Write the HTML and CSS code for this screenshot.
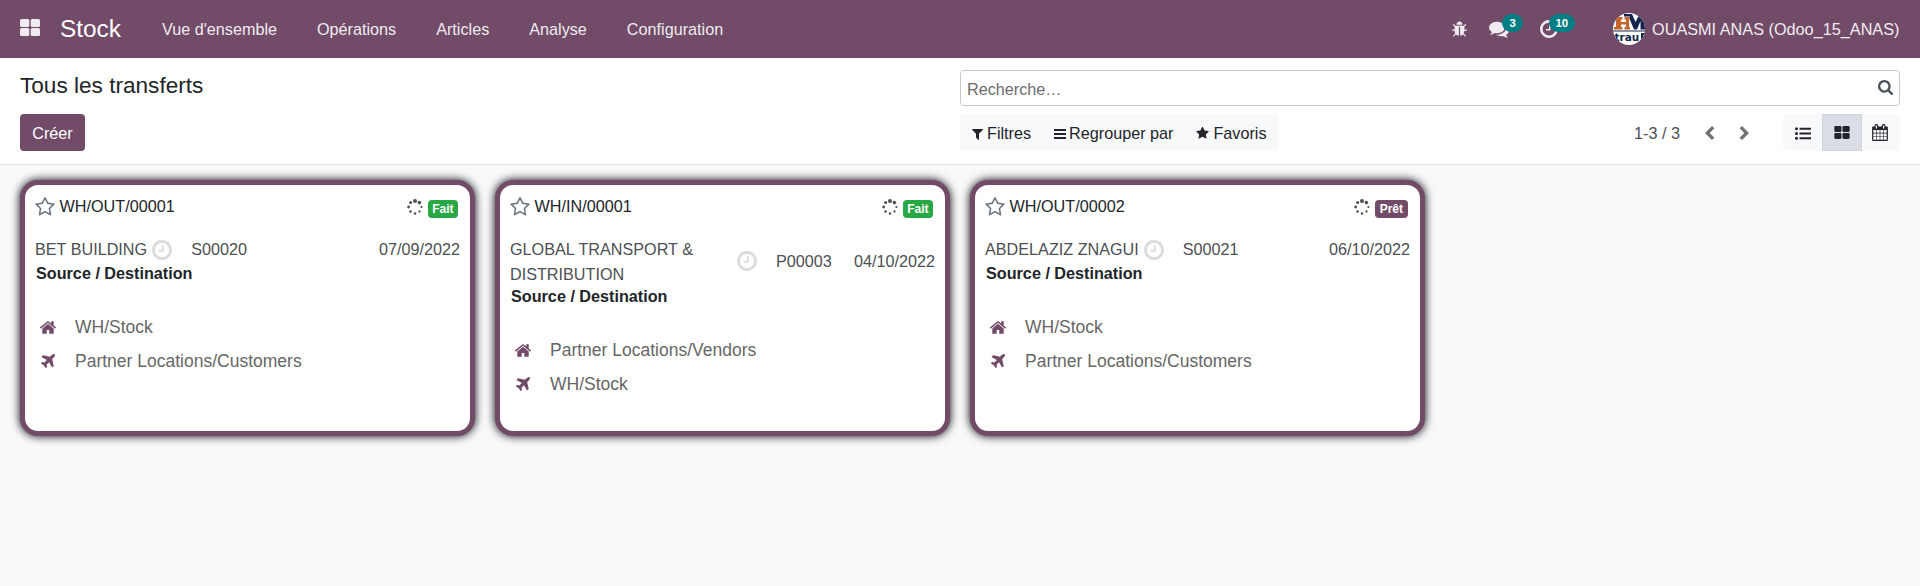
FILE: index.html
```
<!DOCTYPE html>
<html lang="fr">
<head>
<meta charset="utf-8">
<title>Tous les transferts - Odoo</title>
<link rel="stylesheet" href="styles.css">
</head>
<body>
<svg class="sprite" aria-hidden="true">
  <symbol id="th" viewBox="0 0 20 17"><rect width="9.3" height="8" rx="1.5"/><rect x="10.7" width="9.3" height="8" rx="1.5"/><rect y="9" width="9.3" height="8" rx="1.5"/><rect x="10.7" y="9" width="9.3" height="8" rx="1.5"/></symbol>
  <symbol id="bug" viewBox="0 0 1792 1792"><path d="M1696 960q0 26-19 45t-45 19h-224q0 171-67 290l208 209q19 19 19 45t-19 45q-18 19-45 19t-45-19l-198-197q-5 5-15 13t-42 28.5-65 36.5-82 29-97 13v-896h-128v896q-51 0-101.5-13.5t-87-33-66-39-43.5-32.5l-15-14-183 207q-20 21-48 21-24 0-43-16-19-18-20.5-44.5t15.5-46.5l202-227q-58-114-58-274h-224q-26 0-45-19t-19-45 19-45 45-19h224v-294l-173-173q-19-19-19-45t19-45 45-19 45 19l173 173h844l173-173q19-19 45-19t45 19 19 45-19 45l-173 173v294h224q26 0 45 19t19 45zm-480-576h-640q0-133 93.5-226.5t226.5-93.5 226.5 93.5 93.5 226.5z"/></symbol>
  <symbol id="comments" viewBox="0 0 1792 1792"><path d="M1408 768q0 139-94 257t-256.5 186.5-353.5 68.5q-86 0-176-16-124 88-278 128-36 9-86 16h-3q-11 0-20.5-8t-11.5-21q-1-3-1-6.5t.5-6.5 2-6l2.5-5 3.5-5.5 4-5 4.5-5 4-4.5q5-6 23-25t26-29.5 22.5-29 25-38.5 20.500-44q-124-72-195-177t-71-224q0-139 94-257t256.500-186.500 353.500-68.500 353.500 68.500 256.500 186.500 94 257zm384 256q0 120-71 224.500t-195 176.500q10 24 20.500 44t25 38.500 22.500 29 26 29.500 23 25q1 1 4 4.500t4.500 5 4 5 3.500 5.500l2.500 5 2 6 .5 6.500-1 6.500q-3 14-13 22t-22 7q-50-7-86-16-154-40-278-128-90 16-176 16-271 0-472-132 58 4 88 4 161 0 309-45t264-129q125-92 192-212t67-254q0-77-23-152 129 71 204 178t75 230z"/></symbol>
  <symbol id="clock" viewBox="128 128 1536 1536"><path d="M1024 544v448q0 14-9 23t-23 9h-320q-14 0-23-9t-9-23v-64q0-14 9-23t23-9h224v-352q0-14 9-23t23-9h64q14 0 23 9t9 23zm416 352q0-148-73-273t-198-198-273-73-273 73-198 198-73 273 73 273 198 198 273 73 273-73 198-198 73-273zm224 0q0 209-103 385.500t-279.500 279.500-385.500 103-385.500-103-279.500-279.500-103-385.500 103-385.500 279.500-279.500 385.500-103 385.500 103 279.500 279.500 103 385.500z"/></symbol>
  <symbol id="search" viewBox="64 128 1664 1664"><path d="M1216 832q0-185-131.500-316.500t-316.500-131.500-316.500 131.500-131.500 316.500 131.500 316.500 316.500 131.500 316.500-131.500 131.500-316.500zm512 832q0 52-38 90t-90 38q-54 0-90-38l-343-342q-179 124-399 124-143 0-273.500-55.500t-225-150-150-225-55.500-273.500 55.500-273.500 150-225 225-150 273.500-55.500 273.500 55.500 225 150 150 225 55.500 273.500q0 220-124 399l343 343q37 37 37 90z"/></symbol>
  <symbol id="filter" viewBox="192 256 1408 1408"><path d="M1595 295q17 41-14 70l-493 493v742q0 42-39 59-13 5-25 5-27 0-45-19l-256-256q-19-19-19-45v-486l-493-493q-31-29-14-70 17-39 59-39h1280q42 0 59 39z"/></symbol>
  <symbol id="bars" viewBox="0 0 12 10"><path d="M0 0h12v2H0zM0 4h12v2H0zM0 8h12v2H0z"/></symbol>
  <symbol id="star" viewBox="64 59 1664 1600"><path d="M1728 647q0 22-26 48l-363 354 86 500q1 7 1 20 0 21-10.500 35.500t-30.500 14.500q-19 0-40-12l-449-236-449 236q-22 12-40 12-21 0-31.500-14.500t-10.500-35.500q0-6 2-20l86-500-364-354q-25-27-25-48 0-37 56-46l502-73 225-455q19-41 49-41t49 41l225 455 502 73q56 9 56 46z"/></symbol>
  <symbol id="star-o" viewBox="64 59 1664 1600"><path d="M1201 1004l306-297-422-62-189-382-189 382-422 62 306 297-73 421 378-199 377 199zm527-357q0 22-26 48l-363 354 86 500q1 7 1 20 0 50-41 50-19 0-40-12l-449-236-449 236q-22 12-40 12-21 0-31.500-14.500t-10.500-35.500q0-6 2-20l86-500-364-354q-25-27-25-48 0-37 56-46l502-73 225-455q19-41 49-41t49 41l225 455 502 73q56 9 56 46z"/></symbol>
  <symbol id="home" viewBox="89 253 1614 1283"><path d="M1472 992v480q0 26-19 45t-45 19h-384v-384h-256v384h-384q-26 0-45-19t-19-45v-480q0-1 .5-3t.5-3l575-474 575 474q1 2 1 6zm223-69l-62 74q-8 9-21 11h-3q-13 0-21-7l-692-577-692 577q-12 8-24 7-13-2-21-11l-62-74q-8-10-7-23.500t11-21.500l719-599q32-26 76-26t76 26l244 204v-195q0-14 9-23t23-9h192q14 0 23 9t9 23v408l219 182q10 8 11 21.500t-7 23.500z"/></symbol>
  <symbol id="plane" viewBox="192 128 1408 1408"><path d="M1568 160q44 52 12 148t-108 172l-161 161 160 696q5 19-12 33l-128 96q-7 6-19 6-4 0-7-1-15-3-21-16l-279-508-259 259 53 194q5 17-8 31l-96 96q-9 9-23 9h-2q-15-2-24-13l-189-252-252-189q-11-7-13-23-1-13 9-25l96-97q9-9 23-9 6 0 8 1l194 53 259-259-508-279q-14-8-17-24-2-16 9-27l128-128q14-13 30-8l665 159 160-160q76-76 172-108t148 12z"/></symbol>
  <symbol id="calendar" viewBox="64 0 1664 1792"><path d="M192 1664h288v-288h-288v288zm352 0h320v-288h-320v288zm-352-352h288v-320h-288v320zm352 0h320v-320h-320v320zm-352-384h288v-288h-288v288zm736 736h320v-288h-320v288zm-384-736h320v-288h-320v288zm768 736h288v-288h-288v288zm-384-352h320v-320h-320v320zm-352-864v-288q0-13-9.500-22.500t-22.500-9.500h-64q-13 0-22.500 9.500t-9.500 22.500v288q0 13 9.500 22.500t22.500 9.500h64q13 0 22.500-9.500t9.500-22.500zm736 864h288v-320h-288v320zm-384-384h320v-288h-320v288zm384 0h288v-288h-288v288zm32-480v-288q0-13-9.500-22.500t-22.500-9.500h-64q-13 0-22.500 9.500t-9.500 22.500v288q0 13 9.500 22.500t22.500 9.500h64q13 0 22.500-9.500t9.500-22.500zm384-64v1280q0 52-38 90t-90 38h-1408q-52 0-90-38t-38-90v-1280q0-52 38-90t90-38h128v-96q0-66 47-113t113-47h64q66 0 113 47t47 113v96h384v-96q0-66 47-113t113-47h64q66 0 113 47t47 113v96h128q52 0 90 38t38 90z"/></symbol>
  <symbol id="list" viewBox="0 0 16 13"><circle cx="1.500" cy="1.700" r="1.500"/><circle cx="1.500" cy="6.500" r="1.500"/><circle cx="1.500" cy="11.300" r="1.500"/><path d="M4.500.7H16v2H4.500zM4.500 5.500H16v2H4.500zM4.500 10.300H16v2H4.500z"/></symbol>
  <symbol id="left" viewBox="0 0 10 14"><path d="M7 0l2.400 2.300L4.700 7l4.700 4.700L7 14 0 7z"/></symbol>
  <symbol id="right" viewBox="0 0 10 14"><path d="M3 0L.6 2.300 5.300 7 .6 11.700 3 14l7-7z"/></symbol>
  <symbol id="spinner" viewBox="0 0 16 16"><circle cx="8" cy="2" r="2"/><circle cx="12.400" cy="3.600" r="1.800"/><circle cx="14.400" cy="8" r="1.100"/><circle cx="12.500" cy="12.500" r="1.150"/><circle cx="8" cy="14.400" r="1.250"/><circle cx="3.500" cy="12.500" r="1.300"/><circle cx="1.600" cy="8" r="1.400"/><circle cx="3.600" cy="3.600" r="1.500"/></symbol>
</svg>

<header class="navbar">
  <svg class="apps"><use href="#th"/></svg>
  <span class="brand">Stock</span>
  <nav class="menu"><a>Vue d'ensemble</a><a>Opérations</a><a>Articles</a><a>Analyse</a><a>Configuration</a></nav>
  <div class="systray">
    <svg class="bug"><use href="#bug"/></svg>
    <div class="tray messages"><svg><use href="#comments"/></svg><span class="count">3</span></div>
    <div class="tray activities"><svg><use href="#clock"/></svg><span class="count">10</span></div>
    <svg class="avatar" viewBox="0 0 32 32">
      <defs><clipPath id="round"><circle cx="16" cy="16" r="16"/></clipPath></defs>
      <g clip-path="url(#round)">
        <rect width="32" height="32" fill="#fff"/>
        <path fill="#c4652c" d="M2 4h7.500v2.500H8V9h5V6.500h-1.500V4H17v2.500h-1V14h1v2.500h-5.500V14H13v-2.500H8V14h1.500v2.500H1V14h2V6.500H2z"/>
        <path fill="#14264d" d="M11 1h8l3.500 8L26 2h6v14.500h-4.500V8L24 16.500h-3L17 7V3.500h-6z"/>
        <path fill="#14264d" d="M0 17.600h32v1H0z"/>
        <text class="logo-text" x="1.500" y="27.500">trau</text>
        <path fill="#14264d" d="M28 20h4v2h-2v4h-2z"/>
      </g>
    </svg>
    <span class="user">OUASMI ANAS (Odoo_15_ANAS)</span>
  </div>
</header>

<section class="control-panel">
  <div class="cp-left">
    <h1 class="title">Tous les transferts</h1>
    <button class="create">Créer</button>
  </div>
  <div class="cp-right">
    <div class="searchbox"><span>Recherche…</span><svg><use href="#search"/></svg></div>
    <div class="tools">
      <div class="filters">
        <span class="tool"><svg class="i-filter"><use href="#filter"/></svg>Filtres</span>
        <span class="tool"><svg class="i-bars"><use href="#bars"/></svg>Regrouper par</span>
        <span class="tool"><svg class="i-star"><use href="#star"/></svg>Favoris</span>
      </div>
      <div class="pager"><span>1-3 / 3</span><svg><use href="#left"/></svg><svg><use href="#right"/></svg></div>
      <div class="views">
        <span class="view"><svg class="v-list"><use href="#list"/></svg></span>
        <span class="view active"><svg class="v-kanban"><use href="#th"/></svg></span>
        <span class="view"><svg class="v-calendar"><use href="#calendar"/></svg></span>
      </div>
    </div>
  </div>
</section>

<main class="kanban">
  <article class="card">
    <div class="head"><svg class="fav"><use href="#star-o"/></svg><span class="ref">WH/OUT/00001</span><svg class="spin"><use href="#spinner"/></svg><span class="badge done">Fait</span></div>
    <div class="info"><span class="partner">BET BUILDING</span><svg class="clock"><use href="#clock"/></svg><span class="origin">S00020</span><span class="date">07/09/2022</span></div>
    <div class="label">Source / Destination</div>
    <div class="place first"><svg class="home"><use href="#home"/></svg><span>WH/Stock</span></div>
    <div class="place"><svg class="plane"><use href="#plane"/></svg><span>Partner Locations/Customers</span></div>
  </article>
  <article class="card">
    <div class="head"><svg class="fav"><use href="#star-o"/></svg><span class="ref">WH/IN/00001</span><svg class="spin"><use href="#spinner"/></svg><span class="badge done">Fait</span></div>
    <div class="info two-lines"><span class="partner long">GLOBAL TRANSPORT &amp; DISTRIBUTION</span><svg class="clock"><use href="#clock"/></svg><span class="origin">P00003</span><span class="date">04/10/2022</span></div>
    <div class="label">Source / Destination</div>
    <div class="place first"><svg class="home"><use href="#home"/></svg><span>Partner Locations/Vendors</span></div>
    <div class="place"><svg class="plane"><use href="#plane"/></svg><span>WH/Stock</span></div>
  </article>
  <article class="card">
    <div class="head"><svg class="fav"><use href="#star-o"/></svg><span class="ref">WH/OUT/00002</span><svg class="spin"><use href="#spinner"/></svg><span class="badge ready">Prêt</span></div>
    <div class="info"><span class="partner">ABDELAZIZ ZNAGUI</span><svg class="clock"><use href="#clock"/></svg><span class="origin">S00021</span><span class="date">06/10/2022</span></div>
    <div class="label">Source / Destination</div>
    <div class="place first"><svg class="home"><use href="#home"/></svg><span>WH/Stock</span></div>
    <div class="place"><svg class="plane"><use href="#plane"/></svg><span>Partner Locations/Customers</span></div>
  </article>
</main>
</body>
</html>
```
FILE: styles.css
```
* { box-sizing: border-box; }
body {
  margin: 0;
  min-height: 586px;
  background: #f8f9fb;
  color: #212529;
  font: 16.2px/24px "Liberation Sans", Arial, sans-serif;
}
svg { display: block; flex: none; fill: currentColor; }
.sprite { position: absolute; width: 0; height: 0; }

/* Top bar */
.navbar {
  display: flex;
  align-items: center;
  height: 58px;
  padding: 0 20px;
  background: #714b67;
  color: #efebf0;
}
.apps { width: 20px; height: 17px; margin-top: -3px; }
.brand { margin-left: 20px; width: 102px; font-size: 24.4px; color: #fff; }
.menu { display: flex; gap: 40px; }
.systray { display: flex; align-items: center; margin-left: auto; }
.bug { width: 17px; height: 17px; margin-right: 21px; }
.tray { position: relative; }
.messages { width: 20px; margin-right: 31px; }
.messages svg { width: 20px; height: 20px; }
.activities { width: 18px; margin-right: 55px; }
.activities svg { width: 18px; height: 18px; }
.count {
  position: absolute;
  top: -5px;
  left: 13px;
  padding: 0 7.5px;
  border-radius: 9px;
  background: #017e84;
  color: #fff;
  font: bold 11.4px/18px "Liberation Sans", Arial, sans-serif;
}
.activities .count { left: 9px; top: -6px; padding: 0 6.500px; }
.avatar { width: 32px; height: 32px; margin-right: 7px; }
.user { width: 248px; font-size: 16.25px; white-space: nowrap; }
.logo-text { font: bold 10.500px "DejaVu Sans", sans-serif; fill: #14264d; }

/* Control panel */
.control-panel {
  display: grid;
  grid-template-columns: 940px 940px;
  height: 107px;
  padding: 0 20px;
  background: #fff;
  border-bottom: 1px solid #dee2e6;
}
.title { margin: 14px 0; font-weight: 400; font-size: 22.6px; line-height: 28px; }
.create {
  display: block;
  width: 65px;
  height: 37px;
  padding: 0;
  border: 0;
  border-radius: 4px;
  background: #714b67;
  color: #fff;
  font: inherit;
}
.searchbox {
  display: flex;
  align-items: center;
  justify-content: space-between;
  height: 36px;
  margin: 12px 0 8px;
  padding: 2px 6px 0 6px;
  border: 1px solid #c8c8cc;
  border-radius: 4px;
  color: #6c6c6f;
}
.searchbox svg { width: 15px; height: 15px; margin-top: -3px; color: #495057; }
.tools { display: flex; align-items: center; height: 37px; }
.filters {
  display: flex;
  align-items: center;
  gap: 23px;
  width: 318px;
  height: 37px;
  padding-left: 12px;
  border-radius: 4px;
  background: #f8f9fb;
}
.tool { display: flex; align-items: center; white-space: nowrap; padding-top: 1px; }
.i-filter { width: 11px; height: 11px; margin-right: 4px; margin-top: 2px; }
.i-bars { width: 12px; height: 10px; margin-right: 3px; margin-top: 2px; }
.i-star { width: 13px; height: 12px; margin-right: 4px; }
.pager { display: flex; align-items: center; margin-left: auto; color: #4c4f53; }
.pager span { margin-right: 25px; }
.pager svg { width: 10px; height: 14px; margin-right: 24px; color: #6f7275; }
.pager svg:last-child { margin-right: 34px; }
.views { display: flex; height: 37px; border-radius: 4px; background: #f8f9fb; overflow: hidden; }
.view { display: flex; align-items: center; justify-content: center; width: 39px; padding-top: 1px; }
.view:last-child { width: 38px; padding: 0 2px 0 0; }
.view.active { width: 40px; padding: 0; background: #dadde5; border: 1px solid #d0d5db; }
.v-list { width: 16px; height: 13px; }
.v-kanban { width: 16px; height: 13px; }
.v-calendar { width: 16px; height: 17px; }

/* Kanban cards */
.kanban { display: flex; gap: 20px; padding: 15px 20px; }
.card {
  width: 455px;
  height: 256px;
  padding: 8px 10px;
  border: 5px solid #714b67;
  border-radius: 18px;
  background: #fff;
  box-shadow: 0 0 10px #000;
}
.head { display: flex; align-items: center; height: 25px; }
.fav { width: 20px; height: 19px; margin-top: 1px; color: #6c757d; }
.ref { margin-left: 4.500px; margin-right: auto; }
.spin { width: 16px; height: 16px; margin: 2px 5px 0 0; color: #4c4f53; }
.badge {
  margin: 7px 2px 0 0;
  padding: 0 5px;
  border-radius: 4px;
  color: #fff;
  font: bold 12px/18px "Liberation Sans", Arial, sans-serif;
}
.done { padding: 0 4.500px; background: #28a745; }
.ready { background: #714b67; }
.info { display: flex; align-items: center; height: 25px; margin-top: 19px; line-height: 25px; color: #4c4f53; }
.info.two-lines { height: 48px; }
.long { align-self: flex-start; width: 226px; }
.clock { width: 20px; height: 20px; margin-left: 5px; color: #dcdcdc; }
.long + .clock { margin-left: 1px; }
.origin { margin-left: 19px; }
.date { margin-left: auto; }
.label { padding-left: 1px; font-weight: 700; line-height: 22px; }
.place { display: flex; align-items: center; height: 34px; color: #666; font-size: 17.500px; }
.place.first { margin-top: 26px; }
.place svg { color: #714b67; }
.place span { margin-left: 19px; }
.home { width: 16px; height: 13px; margin-left: 5px; }
.plane { width: 14px; height: 14px; margin: 0 1px 0 6px; }
```
